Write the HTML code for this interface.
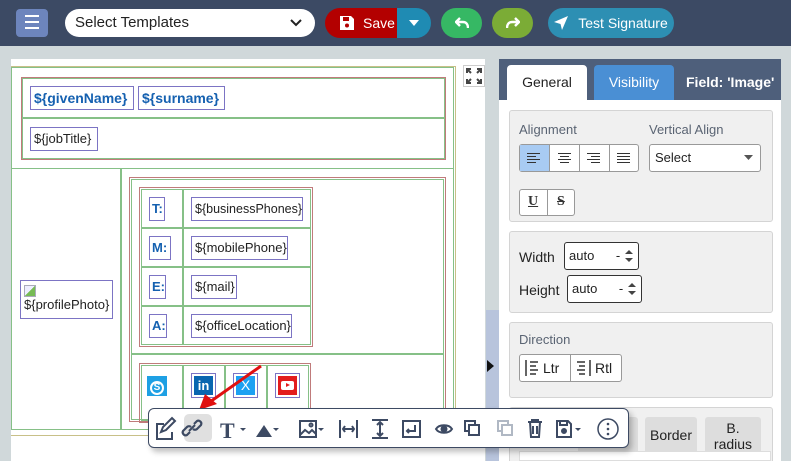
<!DOCTYPE html>
<html><head><meta charset="utf-8"><style>
*{box-sizing:border-box;margin:0;padding:0}
html,body{width:791px;height:461px;overflow:hidden}
body{background:#d0d8da;font-family:"Liberation Sans",sans-serif;position:relative;font-size:13px}
.a{position:absolute}
.hdr{left:0;top:0;width:791px;height:46px;background:#3c4a64}
.btn{position:absolute;top:8px;height:30px;border-radius:15px;color:#fff;font-size:14px;display:flex;align-items:center;justify-content:center}
.fb{position:absolute;border:1px solid #7c74c4;background:#fff;font-size:13px;color:#222;padding:0 3px;line-height:22px;white-space:nowrap}
.bl{color:#1561b0;font-weight:bold}
.g{position:absolute;border:2px solid #86c087}
.r{position:absolute;border:1px solid #c07b7b}
.card{position:absolute;left:509px;width:264px;background:#f0f0f0;border:1px solid #d4d4d4;border-radius:3px}
.lbl{position:absolute;color:#5a6473;font-size:13px}
.ib{position:absolute;border:1px solid #999;background:#fff;border-radius:3px}
.top{z-index:10}
</style></head><body>
<div class="a hdr"></div>
<div class="a" style="left:16px;top:9px;width:32px;height:28px;background:#6d85bd;border-radius:4px"></div>
<div class="a" style="left:25px;top:15px;width:14px;height:2px;background:#fff;box-shadow:0 6px 0 #fff,0 12px 0 #fff"></div>
<div class="a" style="left:65px;top:9px;width:250px;height:28px;background:#fff;border-radius:14px;font-size:15px;line-height:28px;padding-left:10px;color:#222">Select Templates</div>
<svg class="a" style="left:290px;top:18px" width="12" height="10"><path d="M1 2l5 5 5-5" stroke="#222" stroke-width="2" fill="none"/></svg>
<div class="btn" style="left:325px;width:72px;background:#b30000;border-radius:15px 0 0 15px;justify-content:flex-start;padding-left:15px">
<svg width="14" height="14"><path d="M0 0h11l3 3v11H0z" fill="#fff"/><rect x="3" y="1" width="6" height="4" fill="#b30000"/><circle cx="7" cy="9.5" r="2" fill="#b30000"/></svg><span style="margin-left:9px">Save</span></div>
<div class="btn" style="left:397px;width:34px;background:#1f8bb3;border-radius:0 15px 15px 0"><svg width="10" height="6"><path d="M0 0h10L5 6z" fill="#fff"/></svg></div>
<div class="btn" style="left:441px;width:41px;background:#36b864"><svg width="14" height="12"><path d="M5 1L1 5l4 4M1 5h7c3 0 5 2 5 6" stroke="#fff" stroke-width="2.4" fill="none"/></svg></div>
<div class="btn" style="left:492px;width:41px;background:#7bac36"><svg width="14" height="12"><path d="M9 1l4 4-4 4M13 5H6c-3 0-5 2-5 6" stroke="#fff" stroke-width="2.4" fill="none"/></svg></div>
<div class="btn" style="left:548px;width:126px;background:#2d8fb3"><svg width="14" height="14"><path d="M0 6L14 0 8 14 6.5 8z" fill="#fff"/></svg><span style="margin-left:10px">Test Signature</span></div>

<!-- canvas -->
<div class="a" style="left:11px;top:59px;width:474px;height:402px;background:#fff"></div>
<div class="a" style="left:463px;top:65px;width:22px;height:22px;border:1px solid #ccc;background:#fff"></div>
<svg class="a" style="left:466px;top:68px" width="16" height="16"><g stroke="#444" stroke-width="2" fill="none"><path d="M1 5V1h4M11 1h4v4M15 11v4h-4M5 15H1v-4M1 1l4 4M15 1l-4 4M15 15l-4-4M1 15l4-4"/></g></svg>
<div class="a" style="left:11px;top:66px;width:445px;height:1px;background:#c8c088"></div>
<div class="a" style="left:455px;top:66px;width:1px;height:370px;background:#c8c088"></div>
<div class="a" style="left:11px;top:435px;width:445px;height:1px;background:#c8c088"></div>
<div class="g" style="left:11px;top:67px;width:443px;height:102px;border-width:1px"></div>
<div class="r" style="left:21px;top:77px;width:425px;height:83px"></div>
<div class="g" style="left:22px;top:78px;width:423px;height:81px;border-width:1px"></div>
<div class="a" style="left:22px;top:117px;width:423px;height:2px;background:#86c087"></div>
<div class="fb bl" style="left:30px;top:86px;width:104px;font-size:14px">${givenName}</div>
<div class="fb bl" style="left:138px;top:86px;width:87px;font-size:14px">${surname}</div>
<div class="fb" style="left:30px;top:127px;width:68px">${jobTitle}</div>

<div class="g" style="left:11px;top:168px;width:443px;height:262px;border-width:1px"></div>
<div class="a" style="left:120px;top:168px;width:2px;height:262px;background:#86c087"></div>
<div class="fb" style="left:20px;top:280px;width:93px;height:39px;line-height:16px;padding-top:4px">
<div style="width:12px;height:12px;border:1px solid #aab;background:linear-gradient(135deg,#eef 50%,#7b5 50%)"></div>${profilePhoto}</div>
<div class="r" style="left:129px;top:177px;width:317px;height:245px"></div>
<div class="g" style="left:131px;top:179px;width:313px;height:241px;border-width:1px"></div>
<div class="a" style="left:131px;top:353px;width:313px;height:2px;background:#86c087"></div>
<div class="r" style="left:139px;top:187px;width:174px;height:160px"></div>
<div class="g" style="left:141px;top:189px;width:170px;height:156px;border-width:1px"></div>
<div class="a" style="left:182px;top:189px;width:2px;height:156px;background:#86c087"></div>
<div class="a" style="left:141px;top:227px;width:170px;height:2px;background:#86c087;box-shadow:0 39px 0 #86c087,0 78px 0 #86c087"></div>
<div class="fb bl" style="left:149px;top:197px;width:16px;padding:0 2px">T:</div>
<div class="fb bl" style="left:149px;top:236px;width:22px;padding:0 2px">M:</div>
<div class="fb bl" style="left:149px;top:275px;width:17px;padding:0 2px">E:</div>
<div class="fb bl" style="left:149px;top:314px;width:18px;padding:0 2px">A:</div>
<div class="fb" style="left:191px;top:197px;width:112px;font-size:12.5px">${businessPhones}</div>
<div class="fb" style="left:191px;top:236px;width:97px">${mobilePhone}</div>
<div class="fb" style="left:191px;top:275px;width:46px">${mail}</div>
<div class="fb" style="left:191px;top:314px;width:101px">${officeLocation}</div>
<div class="r" style="left:139px;top:363px;width:172px;height:60px"></div>
<div class="g" style="left:141px;top:365px;width:168px;height:56px;border-width:1px"></div>
<div class="a" style="left:182px;top:365px;width:2px;height:56px;background:#86c087;box-shadow:42px 0 0 #86c087,84px 0 0 #86c087"></div>
<div class="a" style="left:147px;top:376px;width:20px;height:20px;background:#1ea0e4;color:#fff;font-weight:bold;text-align:center;line-height:20px;font-size:13px"><span style="display:inline-block;width:14px;height:14px;border:2px solid #fff;border-radius:50%;line-height:10px;font-size:10px">S</span></div>
<div class="a" style="left:191px;top:373px;width:25px;height:25px;border:1px solid #7c74c4;padding:2px"><div style="background:#0a66b0;color:#fff;font-weight:bold;font-size:13px;text-align:center;line-height:19px;height:19px">in</div></div>
<div class="a" style="left:233px;top:373px;width:25px;height:25px;border:1px solid #7c74c4;padding:2px"><div style="background:#1da1f2;color:#fff;font-size:14px;text-align:center;line-height:19px;height:19px">X</div></div>
<div class="a" style="left:275px;top:373px;width:25px;height:25px;border:1px solid #7c74c4;padding:2px"><div style="background:#e31d1d;height:19px;position:relative"><div style="position:absolute;left:3px;top:5px;width:13px;height:9px;background:#fff;border-radius:2px"></div><div style="position:absolute;left:8px;top:7px;border-left:4px solid #e31d1d;border-top:2.5px solid transparent;border-bottom:2.5px solid transparent"></div></div></div>

<!-- splitter -->
<div class="a" style="left:486px;top:310px;width:13px;height:151px;background:#b8c4dc"></div>
<svg class="a" style="left:487px;top:360px" width="8" height="12"><path d="M0 0l7 6-7 6z" fill="#111"/></svg>

<!-- right panel -->
<div class="a" style="left:499px;top:59px;width:282px;height:402px;background:#fff"></div>
<div class="a" style="left:499px;top:59px;width:282px;height:41px;background:#4e5f7b"></div>
<div class="a" style="left:507px;top:65px;width:80px;height:35px;background:#fff;border-radius:4px 4px 0 0;text-align:center;line-height:35px;font-size:14px;color:#222">General</div>
<div class="a" style="left:594px;top:65px;width:80px;height:35px;background:#4a8fd4;border-radius:4px 4px 0 0;text-align:center;line-height:35px;font-size:14px;color:#fff">Visibility</div>
<div class="a" style="left:686px;top:65px;height:35px;line-height:35px;font-size:14px;color:#fff;font-weight:bold">Field: 'Image'</div>

<div class="card" style="top:110px;height:112px"></div>
<div class="lbl" style="left:519px;top:122px">Alignment</div>
<div class="lbl" style="left:649px;top:122px">Vertical Align</div>
<div class="ib" style="left:519px;top:144px;width:120px;height:28px"></div>
<div class="a" style="left:520px;top:145px;width:30px;height:26px;background:#a8cbf3"></div>
<div class="a" style="left:549px;top:145px;width:1px;height:26px;background:#999;box-shadow:30px 0 0 #999,60px 0 0 #999"></div>
<svg class="a" style="left:519px;top:144px" width="120" height="28" stroke="#333" stroke-width="1"><path d="M8 9.5h13M8 12.5h9M8 15.5h13M8 18.5h9M39 9.5h13M41 12.5h9M39 15.5h13M41 18.5h9M68 9.5h13M72 12.5h9M68 15.5h13M72 18.5h9M98 9.5h13M98 12.5h13M98 15.5h13M98 18.5h13"/></svg>
<div class="ib" style="left:649px;top:144px;width:112px;height:28px;font-size:13px;line-height:26px;padding-left:5px;color:#222">Select</div>
<svg class="a" style="left:744px;top:155px" width="10" height="6"><path d="M0 0h9L4.5 5z" fill="#555"/></svg>
<div class="ib" style="left:519px;top:189px;width:56px;height:27px"></div>
<div class="a" style="left:547px;top:190px;width:1px;height:25px;background:#999"></div>
<div class="a" style="left:528px;top:194px;font-family:'Liberation Serif';font-weight:bold;text-decoration:underline;font-size:14px;color:#333">U</div>
<div class="a" style="left:557px;top:194px;font-family:'Liberation Serif';font-weight:bold;text-decoration:line-through;font-size:14px;color:#333">S</div>

<div class="card" style="top:231px;height:82px"></div>
<div class="a" style="left:519px;top:249px;font-size:14px;color:#222">Width</div>
<div class="ib" style="left:564px;top:242px;width:75px;height:28px;border-color:#333;font-size:13px;line-height:26px;padding-left:4px;color:#222">auto <span style="margin-left:18px">-</span></div>
<div class="a" style="left:519px;top:282px;font-size:14px;color:#222">Height</div>
<div class="ib" style="left:567px;top:275px;width:75px;height:28px;border-color:#333;font-size:13px;line-height:26px;padding-left:4px;color:#222">auto <span style="margin-left:18px">-</span></div>
<svg class="a" style="left:625px;top:249px" width="8" height="14"><path d="M0 5l4-4 4 4zM0 9l4 4 4-4z" fill="#444"/></svg>
<svg class="a" style="left:628px;top:282px" width="8" height="14"><path d="M0 5l4-4 4 4zM0 9l4 4 4-4z" fill="#444"/></svg>

<div class="card" style="top:322px;height:76px"></div>
<div class="lbl" style="left:519px;top:332px">Direction</div>
<div class="ib" style="left:519px;top:354px;width:103px;height:28px"></div>
<div class="a" style="left:570px;top:355px;width:1px;height:26px;background:#999"></div>
<svg class="a" style="left:525px;top:360px" width="90" height="16" stroke="#333" stroke-width="1.5"><path d="M1 0v16M5 2h8M5 6h6M5 10h8M5 14h6M65 0v16M52 2h8M54 6h6M52 10h8M54 14h6"/></svg>
<div class="a" style="left:543px;top:360px;font-size:14px;color:#222">Ltr</div>
<div class="a" style="left:595px;top:360px;font-size:14px;color:#222">Rtl</div>

<div class="card" style="top:407px;height:60px"></div>
<div class="a" style="left:578px;top:417px;width:60px;height:44px;background:#ddd;border-radius:3px 3px 0 0"></div>
<div class="a" style="left:621px;top:427px;font-size:14px;color:#222">n</div>
<div class="a" style="left:645px;top:417px;width:52px;height:44px;background:#ddd;border-radius:3px 3px 0 0;text-align:center;line-height:36px;font-size:14px;color:#222">Border</div>
<div class="a" style="left:705px;top:417px;width:56px;height:44px;background:#ddd;border-radius:3px 3px 0 0;text-align:center;padding-top:3px;line-height:16px;font-size:14px;color:#222">B.<br>radius</div>
<div class="a" style="left:519px;top:451px;width:252px;height:10px;background:#fff;border:1px solid #ddd"></div>
<div class="a" style="left:781px;top:59px;width:10px;height:402px;background:#d0d8da"></div>

<!-- toolbar (on top) -->
<svg class="a top" style="left:195px;top:364px" width="70" height="50"><path d="M66 2L12 40" stroke="#e01010" stroke-width="3"/><path d="M4 46l6-16 12 10z" fill="#e01010"/></svg>
<div class="a top" style="left:148px;top:408px;width:481px;height:40px;background:#fff;border:1px solid #3d4a63;border-radius:6px;box-shadow:3px 4px 6px rgba(0,0,0,.25)"></div>
<div class="a top" style="left:184px;top:414px;width:28px;height:28px;background:#e0e0e0;border-radius:5px"></div>
<svg class="a top" style="left:148px;top:408px" width="481" height="40" fill="none" stroke="#3d4a63" stroke-width="2">
<path d="M16 16h-7v15h15v-7M13 24l2-5 9-9 3 3-9 9z"/>
<path d="M42 24l-3 3a3 3 0 0 1-4-4l4-4a3 3 0 0 1 4 0M46 16l3-3a3 3 0 0 1 4 4l-4 4a3 3 0 0 1-4 0M41 23l6-6" stroke-width="2.2"/>
<text x="72" y="30" font-family="Liberation Serif" font-size="22" font-weight="bold" fill="#3d4a63" stroke="none">T</text>
<path d="M92 20h6l-3 3z" fill="#3d4a63" stroke="none"/>
<path d="M108 29l8-12 8 12zM116 17l2 12" fill="#3d4a63" stroke="none"/>
<path d="M125 20h6l-3 3z" fill="#3d4a63" stroke="none"/>
<rect x="152" y="13" width="16" height="16"/><path d="M152 27l5-5 4 3 3-3 4 4"/><circle cx="163" cy="17" r="1.5"/>
<path d="M170 20h6l-3 3z" fill="#3d4a63" stroke="none"/>
<path d="M192 12v18M209 12v18M195 21h11M197 18l-2 3 2 3M204 18l2 3-2 3"/>
<path d="M224 12h16M224 30h16M232 14v14M229 17l3-3 3 3M229 25l3 3 3-3"/>
<rect x="255" y="13" width="17" height="16"/><path d="M267 17v6h-8M261 21l-2 2 2 2"/>
<path d="M288 21c3-5 13-5 16 0-3 5-13 5-16 0z"/><circle cx="296" cy="21" r="2.5" fill="#3d4a63"/>
<rect x="317" y="13" width="10" height="10"/><rect x="321" y="17" width="10" height="10" fill="#fff"/>
<g stroke="#b0b8c4"><rect x="350" y="13" width="10" height="10"/><rect x="354" y="17" width="10" height="10" fill="#fff"/></g>
<path d="M380 14h14M384 14v-2h6v2M382 14l1 15h8l1-15M385 18v8M389 18v8"/>
<path d="M409 13h11l3 3v13h-14z"/><rect x="412" y="13" width="7" height="4"/><circle cx="416" cy="23" r="2" fill="#3d4a63"/>
<path d="M427 20h6l-3 3z" fill="#3d4a63" stroke="none"/>
<circle cx="460" cy="21" r="10" stroke-width="1.5"/><circle cx="460" cy="16" r="1.3" fill="#3d4a63" stroke="none"/><circle cx="460" cy="21" r="1.3" fill="#3d4a63" stroke="none"/><circle cx="460" cy="26" r="1.3" fill="#3d4a63" stroke="none"/>
</svg>
</body></html>
